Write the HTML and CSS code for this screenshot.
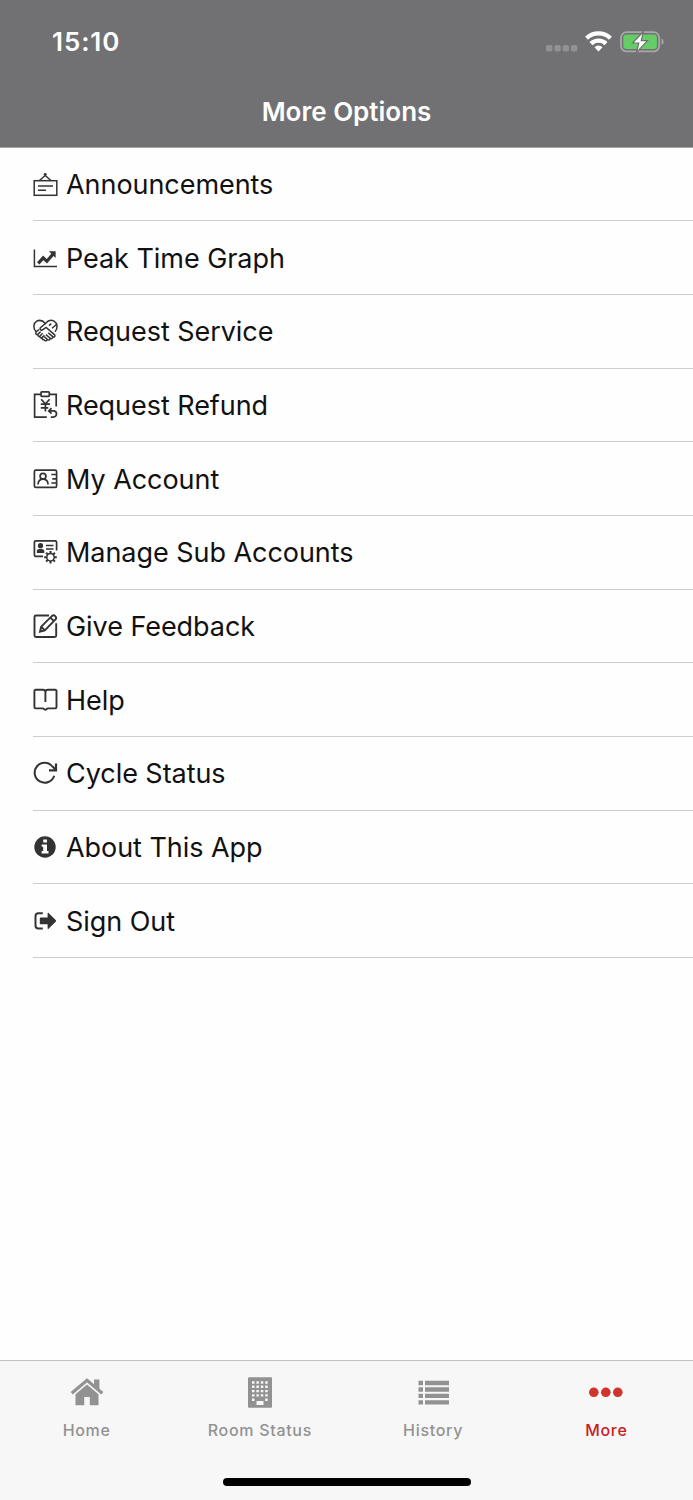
FILE: index.html
```html
<!DOCTYPE html>
<html lang="en">
  <head>
    <meta charset="UTF-8" />
    <meta name="viewport" content="width=device-width, initial-scale=1.0" />
    <title>More Options</title>
    <link rel="stylesheet" href="styles.css">
  </head>
  <body>
    <header>
      <div class="status-bar">
        <span class="time">15:10</span>
        <svg class="status-icons" width="120" height="28" viewBox="0 0 120 28">
          <g fill="#929294">
            <rect x="1" y="17" width="6.5" height="6.5" rx="2" />
            <rect x="9.3" y="17" width="6.5" height="6.5" rx="2" />
            <rect x="17.6" y="17" width="6.5" height="6.5" rx="2" />
            <rect x="25.9" y="17" width="6.5" height="6.5" rx="2" />
          </g>
          <g fill="none" stroke="#fff" stroke-width="4.3">
            <path d="M41.6 10.2a17.2 17.2 0 0 1 23.8 0" />
            <path d="M46 15.6a10.8 10.8 0 0 1 15 0" />
          </g>
          <path d="M49.5 19.2a5.8 5.8 0 0 1 8 0l-4 4.4z" fill="#fff" />
          <rect x="76" y="4.2" width="38.2" height="19.2" rx="5.5" fill="none" stroke="#a8a8aa" stroke-width="1.8" />
          <rect x="78.3" y="6.5" width="33.6" height="14.6" rx="3" fill="#65cc66" />
          <path d="M116.5 10.5v6.6q2.2-1 2.2-3.3t-2.2-3.3" fill="#a8a8aa" />
          <path d="M98.5 3.5L87.5 15h6.3l-2.3 9.5L102.5 12.7h-6.3z" fill="#fff" stroke="#717173" stroke-width="1.2" />
        </svg>
      </div>
      <h1>More Options</h1>
    </header>

    <main>
      <ul class="menu">
        <li>
          <svg viewBox="0 0 30 30">
            <rect x="4.2" y="11.7" width="22.6" height="14.6" />
            <path d="M9.5 11.5l5.7-5 5.7 5M8 17h15M8 21.3h8" />
            <circle class="solid" cx="15.2" cy="5.3" r="1.4" />
          </svg>
          <span>Announcements</span>
        </li>
        <li>
          <svg viewBox="0 0 30 30">
            <path d="M4.4 6.5v17h22.6" />
            <path d="M8.2 20.3l5-5.5 3.7 3.5 6.5-7.6" stroke-width="3.2" />
            <path class="solid" d="M18.8 8.3h6.8V15z" />
          </svg>
          <span>Peak Time Graph</span>
        </li>
        <li>
          <svg viewBox="0 0 30 30">
            <path d="M6 15.8C2.8 12 3.3 7.2 6.8 5.2c3.2-1.8 6.3-.3 8.6 2.3 2.3-2.6 5.5-4.1 8.6-2.3 3.5 2 4.2 6.8 1 10.6" />
            <path d="M15.4 7.5l-5 4.3c-1.2 1.7 1 3 2.5 1.8l3.2-2.2 8.3 7.2c1.5 1.7-.4 3.2-2 1.8l-4.2-3.6M22.4 20.4c1 1.8-1 3-2.5 1.6l-4-3.4M19.9 22c.6 1.8-1.2 2.7-2.7 1.2l-3-2.6M17 23.2c0 2-1.7 2-3.2.5" />
            <path d="M19 9.6l2.3-2M22 12.3l4.5-3.8M6 15.8l3-2.3M6.2 16c-1.3 1.7.5 3.3 2 2l2.4-2.4M8.2 18c-1.2 1.6.5 3 2 1.7l2.5-2.4M10.2 19.8c-1 1.7.7 2.8 2 1.6l2.2-2M12.3 21.5c-.9 1.7.6 2.6 1.7 1.6" />
          </svg>
          <span>Request Service</span>
        </li>
        <li>
          <svg viewBox="0 0 30 30">
            <g stroke-width="1.7">
              <path d="M11 4.4H4.6v22.8h12.2M19.5 4.4h6.7v12.2" />
              <rect x="11" y="1.8" width="8.3" height="4.6" rx=".8" />
              <path d="M11.2 9.2l4.2 4.8 4.2-4.8M15.4 14v7.6M10.8 14.2h9.2M10.8 17.8h7.5M21.5 18.2l-2.7 2.7 2.7 2.7M19.2 20.9h4.2a3.1 3.1 0 0 1 0 6.2h-2.6" />
            </g>
          </svg>
          <span>Request Refund</span>
        </li>
        <li>
          <svg viewBox="0 0 30 30">
            <g stroke-width="1.7">
              <rect x="4.4" y="6.2" width="22.2" height="17.2" rx="1.5" />
              <circle cx="13" cy="12.2" r="2.9" />
              <path d="M8 20.5c.2-3.5 2-5.4 5-5.4s4.9 1.9 5.1 5.4M21.3 10.5h5M22.3 14.8h4M21.3 19h5" />
            </g>
          </svg>
          <span>My Account</span>
        </li>
        <li>
          <svg viewBox="0 0 30 30">
            <path d="M13 19.3H5.8q-1.4 0-1.4-1.4V5.2q0-1.4 1.4-1.4h19.4q1.4 0 1.4 1.4v8.3M16 8.5h7.5M16 12h7.5" stroke-width="1.7" />
            <circle class="solid" cx="10.5" cy="8.7" r="2.6" />
            <path class="solid" d="M6.8 16v-1.5q0-2.5 2.5-2.5h2.5q2.5 0 2.5 2.5V16z" />
            <circle cx="20.5" cy="20.2" r="3.7" />
            <path d="M20.5 14v2.5M20.5 23.9v2.6M14.2 20.2h2.6M24.2 20.2h2.6M16.1 15.8l1.8 1.8M23.1 22.8l1.8 1.8M16.1 24.6l1.8-1.8M23.1 17.6l1.8-1.8" stroke-width="2" />
          </svg>
          <span>Manage Sub Accounts</span>
        </li>
        <li>
          <svg viewBox="0 0 30 30">
            <g stroke-width="1.9">
              <path d="M19 4.5H6Q4.5 4.5 4.5 6v18.5Q4.5 26 6 26h18.7q1.5 0 1.5-1.5V12.3" />
              <path d="M10 20.7l1.2-5L22 4.9q1.7-1.3 3.3.2 1.6 1.7.2 3.3L14.8 19.3zM20.4 6.7l3.5 3.5M11.2 15.7l3.6 3.6" />
            </g>
          </svg>
          <span>Give Feedback</span>
        </li>
        <li>
          <svg viewBox="0 0 30 30">
            <path d="M15.4 17V7.2q0-2.4-2.5-2.4H5.7q-1.3 0-1.3 1.3v16q0 1.3 1.3 1.3h6.7q1.4 0 2 1 .9.9 1.9 0 .7-1 2-1h6.9q1.3 0 1.3-1.3v-16q0-1.3-1.3-1.3h-7.3q-2.5 0-2.5 2.4" stroke-width="1.9" />
          </svg>
          <span>Help</span>
        </li>
        <li>
          <svg viewBox="0 0 30 30">
            <path d="M24.2 17.7A10 10 0 1 1 22.5 8.5l3 3" stroke-width="2" />
            <path d="M26 5.5v6.8h-7" stroke-width="2.2" />
          </svg>
          <span>Cycle Status</span>
        </li>
        <li>
          <svg viewBox="0 0 30 30">
            <circle class="solid" cx="15" cy="15" r="10.7" />
            <path class="cut" d="M13.2 7.4h3.8v3.2h-3.8zM11.7 12.4H17v6.7h1.5v2.3h-6.9v-2.3h1.6v-4.4h-1.5z" />
          </svg>
          <span>About This App</span>
        </li>
        <li>
          <svg viewBox="0 0 30 30">
            <path d="M12.8 7.3H8.5q-3 0-3 3v9.2q0 3 3 3h4.3" stroke-width="2" />
            <path class="solid" d="M10.6 11.6h7V7.3q.3-.8 1-.3l7.3 7.2q.5.7 0 1.4l-7.3 7.2q-.7.5-1-.3v-4.2h-7q-.8 0-.8-.8v-5.1q0-.8.8-.8" />
          </svg>
          <span>Sign Out</span>
        </li>
      </ul>
    </main>

    <nav>
      <div class="tabs">
        <a class="tab">
          <svg width="36" height="34" viewBox="0 0 36 34">
            <path d="M2.7 18.2L18 5.3l15.3 12.9" fill="none" stroke="currentColor" stroke-width="3.2" />
            <path d="M25 4.5h5.4v10.3L25 10.3zM18 9.4l11.5 9.8v11.1h-8.7V22h-5.6v8.3H6.5V19.2z" />
          </svg>
          <span>Home</span>
        </a>
        <a class="tab">
          <svg width="36" height="34" viewBox="0 0 36 34">
            <rect x="6" y="2.2" width="24" height="30.5" rx="1" />
            <path class="windows" d="M10 7.5h16M10 11.8h16M10 16.1h16M10 20.4h16" />
            <path class="windows" d="M10 24.7h2.5M23.2 24.7h2.5" />
            <path d="M14.5 26h7v4h-7z" fill="#f7f7f7" />
          </svg>
          <span>Room Status</span>
        </a>
        <a class="tab">
          <svg width="36" height="34" viewBox="0 0 36 34">
            <path d="M3.5 8H34M3.5 14.5H34M3.5 20.9H34M3.5 27.3H34" stroke="currentColor" stroke-width="4.3" stroke-dasharray="4.5 2 24" />
          </svg>
          <span>History</span>
        </a>
        <a class="tab active">
          <svg width="36" height="34" viewBox="0 0 36 34">
            <circle cx="5.8" cy="17.3" r="4.8" />
            <circle cx="17.8" cy="17.3" r="4.8" />
            <circle cx="29.8" cy="17.3" r="4.8" />
          </svg>
          <span>More</span>
        </a>
      </div>
      <div class="home-indicator"></div>
    </nav>
  </body>
</html>
```

FILE: styles.css
```css
* {
  margin: 0;
  padding: 0;
  box-sizing: border-box;
}

body {
  font-family: Inter, "Liberation Sans", sans-serif;
  background-color: #fefefe;
  color: #111;
  display: flex;
  flex-direction: column;
  height: 1500px;
}

header {
  height: 148px;
  background-color: #717173;
  border-bottom: 1px solid #a5a5a7;
  color: #fff;
}

.status-bar {
  display: flex;
  justify-content: space-between;
  align-items: center;
  height: 84px;
  padding: 0 28px 0 52px;
}

.time {
  font-size: 26px;
  font-weight: 600;
  letter-spacing: 0.9px;
  line-height: 30px;
}

h1 {
  font-size: 26px;
  font-weight: 600;
  line-height: 56px;
  text-align: center;
}

main {
  flex-grow: 1;
}

.menu {
  list-style: none;
  margin-left: 33px;
}

.menu li {
  display: flex;
  align-items: center;
  height: 73.68px;
  border-bottom: 1px solid #cdcdcf;
  font-size: 27px;
  letter-spacing: -0.05px;
}

.menu li:first-child {
  height: 73.2px;
}

.menu span {
  padding-top: 1.4px;
}

.menu svg {
  width: 30px;
  height: 30px;
  margin-left: -3px;
  margin-right: 6px;
  fill: none;
  stroke: #333;
  stroke-width: 1.5;
}

.menu .solid {
  fill: #333;
  stroke: none;
}

.menu .cut {
  fill: #fff;
  stroke: none;
}

nav {
  height: 140px;
  background-color: #f7f7f7;
  border-top: 1px solid #c2c2c4;
}

.tabs {
  display: grid;
  grid-template-columns: repeat(4, 1fr);
  height: 117px;
  padding-top: 14px;
}

.tab {
  display: flex;
  flex-direction: column;
  align-items: center;
  gap: 11px;
  color: #929292;
  font-size: 16px;
  font-weight: 500;
  letter-spacing: 0.7px;
}

.tab svg {
  fill: currentColor;
}

.tab .windows {
  stroke: #f7f7f7;
  stroke-width: 2.4;
  stroke-dasharray: 2.5 1.9;
}

.tab.active {
  color: #c9201f;
}

.tab.active svg {
  color: #d0342c;
}

.home-indicator {
  width: 248px;
  height: 8px;
  margin: 0 auto;
  border-radius: 4px;
  background-color: #000;
}
```
